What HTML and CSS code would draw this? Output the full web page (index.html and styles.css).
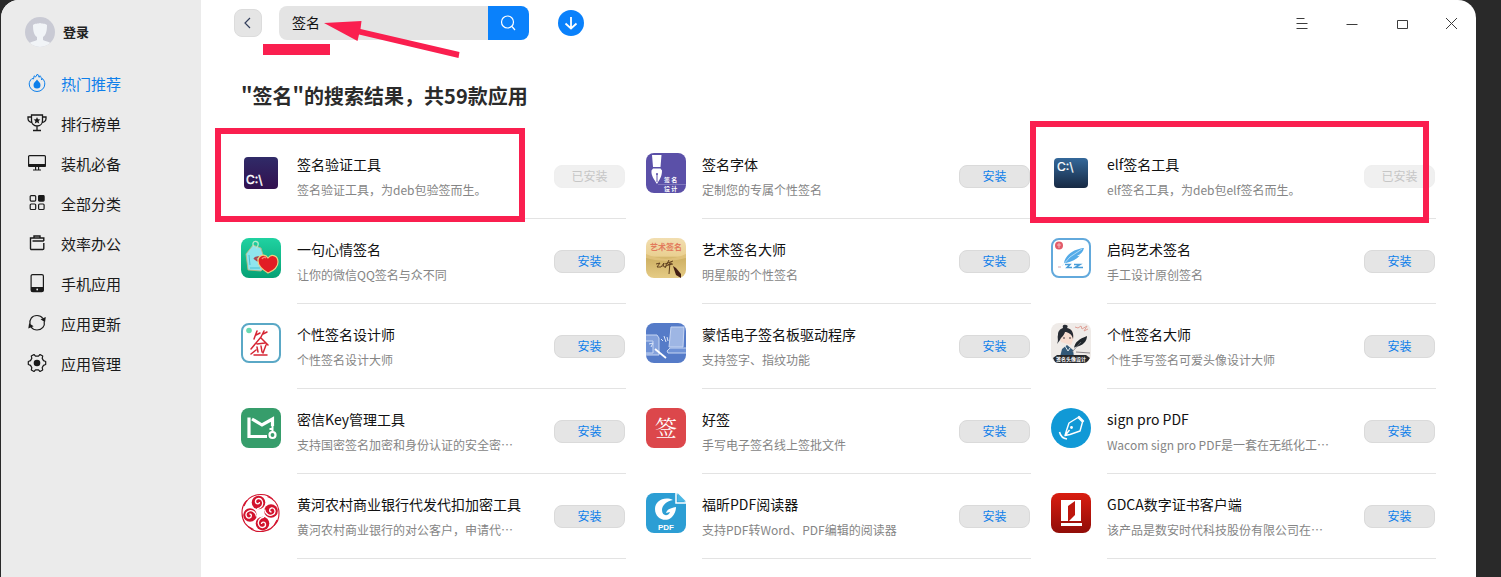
FILE: index.html
```html
<!DOCTYPE html>
<html lang="zh-CN">
<head>
<meta charset="utf-8">
<title>应用商店</title>
<link rel="stylesheet" href="styles.css">
</head>
<body>
<div class="window">
  <aside class="sidebar">
    <button class="account" type="button">
      <svg class="avatar" viewBox="0 0 30 30" aria-hidden="true"><defs><clipPath id="av"><circle cx="15" cy="15" r="15"/></clipPath></defs><g clip-path="url(#av)"><rect width="30" height="30" fill="#c9cad4"/><path d="M2 30c0-5 6-5 10-7v-3c-3-2-4-6-4-12 2-2 5-1 7-2 2 1 5 0 7 2 0 6-1 10-4 12v3c4 2 10 2 10 7z" fill="#f1f4f7"/></g></svg>
      <span>登录</span>
    </button>
    <nav class="nav">
      <a class="nav-item active" href="#"><svg viewBox="0 0 20 20"><path d="M5 5.500C3.300 7 2.200 9 2.200 11a7.800 7.500 0 0 0 15.600 0c0-2-.8-4-2.300-5.500l-.8 1.500c-.2-2-.8-3.300-1.700-4.300l-.8 1.600L10.500 1 8.500 4 7.200 2.800 6.500 6z" fill="none" stroke="currentColor"/><path d="M10 6.500c1 1.500 3.500 3 3.500 5.500a3.500 3.500 0 0 1-7 0c0-2.500 2.500-4 3.500-5.500z" fill="currentColor"/></svg>热门推荐</a>
      <a class="nav-item" href="#"><svg viewBox="0 0 20 20"><path d="M4.500 2h11v5.500c0 3.500-2.500 5.500-5.500 5.500s-5.500-2-5.500-5.500zM4.500 4H1v1.500C1 8 2.500 9 5 9.500M15.500 4H19v1.500C19 8 17.500 9 15 9.500M10 13v4M6 17.500h8" fill="none" stroke="currentColor" stroke-width="1.300"/><path d="M10 4l1 2.300 2.400.2-1.800 1.600.6 2.400-2.200-1.300-2.200 1.300.6-2.400-1.800-1.600 2.400-.2z" fill="currentColor"/></svg>排行榜单</a>
      <a class="nav-item" href="#"><svg viewBox="0 0 20 20"><rect x="1.600" y="2.600" width="16.800" height="10.800" rx="1" fill="none" stroke="currentColor" stroke-width="1.200"/><path d="M1.500 11h17v3h-17zM8 14h1.200v3H8zM11 14h1.200v3H11zM6 16.500h8v1H6z" fill="currentColor"/></svg>装机必备</a>
      <a class="nav-item" href="#"><svg viewBox="0 0 20 20" fill="none" stroke="currentColor" stroke-width="1.200"><rect x="3.200" y="2.600" width="5.500" height="5.500" rx="1"/><rect x="11.600" y="2.600" width="5.500" height="5.500" rx=".8" fill="currentColor"/><rect x="3.200" y="11" width="5.500" height="5.500" rx="1"/><rect x="11.600" y="11" width="5.500" height="5.500" rx="1"/></svg>全部分类</a>
      <a class="nav-item" href="#"><svg viewBox="0 0 20 20" fill="none" stroke="currentColor" stroke-width="1.400"><path d="M16.800 10v5.500a1 1 0 0 1-1 1H4.500a1 1 0 0 1-1-1V5h13.300v3M7 5V3h6v2M5.500 8h11.300"/></svg>效率办公</a>
      <a class="nav-item" href="#"><svg viewBox="0 0 20 20"><rect x="4.100" y="1.600" width="12.300" height="17" rx="1.500" fill="none" stroke="currentColor" stroke-width="1.200"/><path d="M4 14h12.500v3.500A1.500 1.500 0 0 1 15 19H5.500A1.500 1.500 0 0 1 4 17.500z" fill="currentColor"/><circle cx="10.200" cy="16.500" r=".9" fill="#ebebeb"/></svg>手机应用</a>
      <a class="nav-item" href="#"><svg viewBox="0 0 20 20"><path d="M3 11.500C2 6.500 5 2.500 10 2.500c2.500 0 4.500 1 6 3M17.200 8.500c1 4.500-2 8.500-7.200 8.500-2.500 0-4.500-1-6-3" fill="none" stroke="currentColor" stroke-width="1.200"/><path d="M18.800 4l-.8 5.200-4.500-3zM1.300 15.500l.8-5.200 4.500 3z" fill="currentColor"/></svg>应用更新</a>
      <a class="nav-item" href="#"><svg viewBox="0 0 20 20"><path d="M7 1.500l1.500 1.700h3L13 1.500l2.700 1.600-.5 2.300 1.300 2.200 2.200.9v3l-2.200.9-1.300 2.200.5 2.300L13 18.500l-1.500-1.700h-3L7 18.500l-2.700-1.600.5-2.300-1.300-2.200-2.200-.9v-3l2.200-.9 1.300-2.200-.5-2.300z" fill="none" stroke="currentColor" stroke-width="1.200" stroke-linejoin="round"/><circle cx="10" cy="10" r="3.300" fill="currentColor"/></svg>应用管理</a>
    </nav>
  </aside>

  <main class="main">
    <header class="toolbar">
      <button class="back" type="button" aria-label="返回"><svg width="14" height="14" viewBox="0 0 14 14"><path d="M9 2L4 7l5 5" fill="none" stroke="#333f5c" stroke-width="1.200"/></svg></button>
      <form class="search">
        <input type="text" value="签名" aria-label="搜索">
        <button type="button" aria-label="搜索"><svg width="18" height="18" viewBox="0 0 18 18" fill="none" stroke="#fff" stroke-width="1.200"><circle cx="7.500" cy="8" r="6"/><path d="M12 12.500L15 16"/></svg></button>
        <span class="underline-mark"></span>
        <svg class="arrow-mark" width="136" height="40" viewBox="0 0 136 40" aria-hidden="true"><path d="M0 4L37.500 2 36.500 10 135.500 33 134.500 39 35 15.500 33.500 22z" fill="#fa1f4f"/></svg>
      </form>
      <button class="download" type="button" aria-label="下载"><svg width="26" height="26" viewBox="0 0 26 26"><path d="M13 7v11.500M7.500 13.500l5.500 5 5.500-5" fill="none" stroke="#fff" stroke-width="1.800"/></svg></button>
      <div class="window-controls">
        <button type="button" aria-label="菜单"><svg viewBox="0 0 14 14"><path d="M2.500 2.500h8M2.500 7.500h11M2.500 12.500h11"/></svg></button>
        <button type="button" aria-label="最小化"><svg viewBox="0 0 14 14"><path d="M2.500 8.500h11"/></svg></button>
        <button type="button" aria-label="最大化"><svg viewBox="0 0 14 14"><path d="M3.500 4.500h10v8h-10z"/></svg></button>
        <button type="button" aria-label="关闭"><svg viewBox="0 0 14 14"><path d="M2 2l11 11M13 2L2 13"/></svg></button>
      </div>
    </header>

    <h1 class="heading">"签名"的搜索结果，共59款应用</h1>

    <section class="grid">
      <article class="card mark-first">
        <svg class="icon" viewBox="0 0 40 40"><defs><linearGradient id="g1" x2="0" y2="1"><stop stop-color="#302b68"/><stop offset="1" stop-color="#32104f"/></linearGradient></defs><rect x="3" y="4" width="34" height="32" rx="4" fill="url(#g1)"/><text x="5" y="31" font-size="12" fill="#fff" stroke="#fff" stroke-width=".4" class="mono-label">C:\</text></svg>
        <div class="body"><div class="info"><h2>签名验证工具</h2><p>签名验证工具，为deb包验签而生。</p></div><button type="button" disabled>已安装</button></div>
      </article>
      <article class="card">
        <svg class="icon" viewBox="0 0 40 40"><rect width="40" height="40" rx="8" fill="#5b50a8"/><path d="M6 2h9.500l-1 12H7zM7 15.500h7.500l1.500 2c0 6-2 8-5 13.500C8 26 5 23 5.500 17.500z" fill="#fff"/><path d="M11 21v8" stroke="#5b50a8"/><circle cx="11" cy="21" r="1" fill="#5b50a8"/><path d="M12 31.500h28" stroke="#a9a3d5" stroke-width=".5"/><g class="kai" fill="#fff" font-size="6" font-weight="700"><text x="18" y="29">签 名</text><text x="18" y="38">设 计</text></g></svg>
        <div class="body"><div class="info"><h2>签名字体</h2><p>定制您的专属个性签名</p></div><button type="button">安装</button></div>
      </article>
      <article class="card mark-third">
        <svg class="icon" viewBox="0 0 40 40"><defs><linearGradient id="g2" x2="0" y2="1"><stop stop-color="#34689a"/><stop offset="1" stop-color="#172943"/></linearGradient></defs><rect x="3" y="5" width="34" height="30" rx="4" fill="url(#g2)"/><text x="6" y="18" font-size="12" fill="#fff" stroke="#fff" stroke-width=".2" class="mono-label">C:\</text></svg>
        <div class="body"><div class="info"><h2>elf签名工具</h2><p>elf签名工具，为deb包elf签名而生。</p></div><button type="button" disabled>已安装</button></div>
      </article>

      <article class="card">
        <svg class="icon" viewBox="0 0 40 40"><defs><linearGradient id="g3" x2="0" y2="1"><stop stop-color="#20d2a1"/><stop offset="1" stop-color="#06a175"/></linearGradient></defs><rect width="40" height="40" rx="8" fill="url(#g3)"/><path d="M5 16L12 7l8 3 5 17-5 6-13-1z" fill="#8ee5ee" stroke="#c9b478" stroke-width=".8"/><path d="M13 9c-2-3-1-6 2-5.500s3 4 0 7" fill="none" stroke="#b6e9cc" stroke-width="1.300"/><path d="M9 30h10M8 17l1 10" stroke="#49bfd2"/><path d="M14 20l4-1M13 20l4 3" stroke="#a84953" stroke-width="2"/><path d="M27 35c-5-3-10-7-10-12 0-6 7-8 10-3 4-5 10-2 10 4 0 5-5 9-10 11z" fill="#e21d24" stroke="#f0d180" stroke-width="1.200"/><path d="M21 21c1-2 3-2 4-1" stroke="#ff8171" fill="none" stroke-width="1.500"/></svg>
        <div class="body"><div class="info"><h2>一句心情签名</h2><p>让你的微信QQ签名与众不同</p></div><button type="button">安装</button></div>
      </article>
      <article class="card">
        <svg class="icon" viewBox="0 0 40 40"><defs><linearGradient id="g4" x2="0" y2="1"><stop stop-color="#f2deb1"/><stop offset=".45" stop-color="#ead091"/><stop offset=".5" stop-color="#ceb063"/><stop offset="1" stop-color="#e5cb85"/></linearGradient></defs><rect width="40" height="40" rx="8" fill="url(#g4)"/><path d="M0 16q20 9 40 0v4q-20 6-40 0z" fill="#dfc17a"/><text x="4" y="12" font-size="8" font-weight="700" fill="#e27a5c" class="kai">艺术签名</text><path d="M10 26l4-1-3 4 4 0 3-4-1 4M19 26l8-3M23 22l-4 8M22 27l5-1M24 24l-1 12M18 29l8-4" fill="none" stroke="#60401f" stroke-width="1"/><path d="M27 28l3 2 5 6v4l-5-3z" fill="#442015"/></svg>
        <div class="body"><div class="info"><h2>艺术签名大师</h2><p>明星般的个性签名</p></div><button type="button">安装</button></div>
      </article>
      <article class="card">
        <svg class="icon" viewBox="0 0 40 40"><rect x="1" y="1" width="38" height="38" rx="7" fill="#fff" stroke="#62a9dc" stroke-width="2"/><circle cx="8" cy="7.500" r="4" fill="#e25b68"/><path d="M8 5v5M6 7h4" stroke="#f6b7bd"/><path d="M13 25c1-8 10-14 20-15-1 4-3 6-7 8 1 0 2 0 3-.5-4 4-8 6-14 7.500z" fill="#54abe8"/><path d="M11 28l8-9L31 11" fill="none" stroke="#d7efff" stroke-width=".7"/><path d="M14 26.500l5 0-3 3 5 0M23 26.500l6 0-5 3 8 0" fill="none" stroke="#489dd9" stroke-width="1.500"/><path d="M7 29h3" stroke="#d1a6b2"/></svg>
        <div class="body"><div class="info"><h2>启码艺术签名</h2><p>手工设计原创签名</p></div><button type="button">安装</button></div>
      </article>

      <article class="card">
        <svg class="icon" viewBox="0 0 40 40"><rect x="1" y="1" width="38" height="38" rx="7" fill="#fff" stroke="#5aa8c6" stroke-width="2"/><circle cx="8" cy="7.500" r="2.800" fill="#69d8b1"/><path d="M16 8l-3 8M15 12l4-2M23 8l-3 6M22 11l4-2M20 14l-10 12M20 15l7 7M16 21l8-1M16 24l1 5M20 23l1 6M25 22l-3 8M13 32l13 0M10 31l5-4" fill="none" stroke="#d62634" stroke-width="1.500" stroke-linecap="round"/></svg>
        <div class="body"><div class="info"><h2>个性签名设计师</h2><p>个性签名设计大师</p></div><button type="button">安装</button></div>
      </article>
      <article class="card">
        <svg class="icon" viewBox="0 0 40 40"><defs><clipPath id="c8"><rect width="40" height="40" rx="8"/></clipPath></defs><g clip-path="url(#c8)"><rect width="40" height="40" fill="#557bc8"/><path d="M-2 12h13l2 3v17H-2z" fill="#84a1dc" stroke="#c7d6f2"/><path d="M-1 18h8v12h-8" fill="#6f92d6" stroke="#c7d6f2"/><path d="M25 4h13l-1 20H23z" fill="#9eb6e4" stroke="#c7d6f2"/><path d="M21 28l3-3h18v5H22z" fill="#6f92d6" stroke="#c7d6f2"/><path d="M9 26l11 9" stroke="#fff" stroke-width="1.800"/><path d="M3 21l4-1-2 4M15 16l2 2M18 13l2 6M21 14l1 4" stroke="#dce6f8" fill="none"/></g></svg>
        <div class="body"><div class="info"><h2>蒙恬电子签名板驱动程序</h2><p>支持签字、指纹功能</p></div><button type="button">安装</button></div>
      </article>
      <article class="card">
        <svg class="icon" viewBox="0 0 40 40"><defs><clipPath id="c9"><rect width="40" height="40" rx="8"/></clipPath></defs><g clip-path="url(#c9)"><rect width="40" height="40" fill="#efebe8"/><path d="M8 13c0-7 4-9 8-8 5 0 8 5 6 12l-2 5-10-3z" fill="#f7ddd1"/><path d="M6 21c2-4 0-6 1-9 0-4 2-6 5-7-1-3 1-4 3-3 2 0 2 2 1 3 5 1 7 5 6 11-1-5-5-7-8-7-1 4-4 5-5 8z" fill="#272c34"/><path d="M12 15h2M18 15h2" stroke="#41363b"/><path d="M9 34l2-8 5-4 6 5 1 7z" fill="#335978"/><path d="M14 23l3 5 2-3" stroke="#dfe9ef" fill="none"/><path d="M23 25c1-6 5-9 13-12 0 5-4 10-12 11z" fill="#20262b"/><path d="M21 29L30 19" stroke="#70747b" stroke-width=".8"/><path d="M24 4l3 1 3-2 1 3 5-3-3 5 4-2" stroke="#dfa096" fill="none"/><path d="M25 29l14 1" stroke="#8b8588"/><path d="M2 35l4-3h29l4 3-4 6H5z" fill="#27282b"/><text x="5" y="38" font-size="5" font-weight="700" fill="#fff" class="kai">签名头像设计</text></g></svg>
        <div class="body"><div class="info"><h2>个性签名大师</h2><p>个性手写签名可爱头像设计大师</p></div><button type="button">安装</button></div>
      </article>

      <article class="card">
        <svg class="icon" viewBox="0 0 40 40"><rect width="40" height="40" rx="8" fill="#369d6b"/><path d="M26 28.500H8V9.500M11 11l10 6 10.500-6v7" fill="none" stroke="#fff" stroke-width="3.200"/><circle cx="31.500" cy="27" r="3" fill="none" stroke="#fff" stroke-width="2.200"/><path d="M31.500 24v-6M28.500 21h3" stroke="#fff" stroke-width="2"/></svg>
        <div class="body"><div class="info"><h2>密信Key管理工具</h2><p>支持国密签名加密和身份认证的安全密…</p></div><button type="button">安装</button></div>
      </article>
      <article class="card">
        <svg class="icon" viewBox="0 0 40 40"><rect width="40" height="40" rx="8" fill="#dc474b"/><text x="9" y="28" font-size="22" fill="#fff" class="serif">签</text></svg>
        <div class="body"><div class="info"><h2>好签</h2><p>手写电子签名线上签批文件</p></div><button type="button">安装</button></div>
      </article>
      <article class="card">
        <svg class="icon" viewBox="0 0 40 40"><circle cx="20" cy="20" r="20" fill="#1199d6"/><path d="M27 9.500l4.500 4.500-2.500 9-10 3.500-5 1 1.500-5 2.500-7.500zM14.500 27l4-5M27 9.500l1-1 4.500 4.500-1 1" fill="none" stroke="#fff" stroke-width="1.400" stroke-linejoin="round"/><circle cx="20.500" cy="19.500" r="1.400" fill="#fff"/><path d="M8.500 24c1 4 3.500 6.500 7.500 7" fill="none" stroke="#fff" stroke-width="1.600"/></svg>
        <div class="body"><div class="info"><h2>sign pro PDF</h2><p>Wacom sign pro PDF是一套在无纸化工…</p></div><button type="button">安装</button></div>
      </article>

      <article class="card">
        <svg class="icon" viewBox="0 0 40 40"><defs><g id="swirl"><circle cx="17.500" cy="9.500" r="6.800" fill="#d2132d"/><path d="M16 16c5-1 7-5 5-8.500s-7-2-6.500 1.500c.5 2.500 4 2.500 4 0" fill="none" stroke="#fff" stroke-width="1.300"/><path d="M3 13C6 5 12 1.500 20 1.500c5 0 9 1.500 12 5" fill="none" stroke="#d2132d" stroke-width="1.100"/></g></defs><use href="#swirl"/><use href="#swirl" transform="rotate(90 19.500 20)"/><use href="#swirl" transform="rotate(180 19.500 20)"/><use href="#swirl" transform="rotate(270 19.500 20)"/></svg>
        <div class="body"><div class="info"><h2>黄河农村商业银行代发代扣加密工具</h2><p>黄河农村商业银行的对公客户，申请代…</p></div><button type="button">安装</button></div>
      </article>
      <article class="card">
        <svg class="icon" viewBox="0 0 40 40"><path d="M8 0h22l10 10v22a8 8 0 0 1-8 8H8a8 8 0 0 1-8-8V8a8 8 0 0 1 8-8z" fill="#2c9ed4"/><path d="M31.500 0v8.500H40z" fill="#4cb7e4"/><path d="M30 0v10h10" fill="none" stroke="#fff" stroke-width="1.500"/><path d="M27 7C18 3 9 8 9 16c0 10 11 14 17 8 3-3 4-7 4-10-5 1-9 2-10 6l4-1c-2 5-8 4-8-2 0-5 5-9 11-10z" fill="#fff"/><text x="20" y="37" text-anchor="middle" font-size="8" font-weight="700" fill="#fff" class="sans">PDF</text></svg>
        <div class="body"><div class="info"><h2>福昕PDF阅读器</h2><p>支持PDF转Word、PDF编辑的阅读器</p></div><button type="button">安装</button></div>
      </article>
      <article class="card">
        <svg class="icon" viewBox="0 0 40 40"><defs><linearGradient id="g5" x2="0" y2="1"><stop stop-color="#d91d10"/><stop offset="1" stop-color="#910d08"/></linearGradient></defs><rect width="40" height="40" rx="8" fill="url(#g5)"/><path d="M10 7h20v21H10zM10 30h21v3H10z" fill="#fff"/><path d="M17 13l7-5v14l-6 6h-1z" fill="#bd160d"/></svg>
        <div class="body"><div class="info"><h2>GDCA数字证书客户端</h2><p>该产品是数安时代科技股份有限公司在…</p></div><button type="button">安装</button></div>
      </article>
    </section>
  </main>
</div>
</body>
</html>
```

FILE: styles.css
```css
* { box-sizing: border-box; }
body {
  margin: 0;
  background: #292929;
  color: #111;
  font-family: "Noto Sans CJK SC", sans-serif;
  font-size: 14px;
}
button, input { font: inherit; color: inherit; border: 0; padding: 0; margin: 0; background: none; }
svg { display: block; flex: none; }
.sans { font-family: "Liberation Sans", sans-serif; }
.mono-label { font-family: Inter, "Liberation Sans", sans-serif; }
.kai { font-family: "Noto Sans CJK SC", sans-serif; }
.serif { font-family: "Noto Serif CJK SC", "Noto Sans CJK SC", serif; font-weight: 400; }

.window {
  display: flex;
  min-height: 100vh;
  margin: 0 25px 0 1px;
  background: #fff;
  border-radius: 18px 18px 0 0;
  overflow: hidden;
}

.sidebar { flex: none; width: 200px; background: #ebebeb; }
.account {
  display: flex;
  align-items: center;
  gap: 8px;
  height: 63px;
  padding: 0 24px;
  font-size: 13px;
  line-height: 20px;
  font-weight: 700;
  color: #222;
}
.avatar { width: 30px; height: 30px; }
.nav-item {
  display: flex;
  align-items: center;
  gap: 14px;
  height: 40px;
  padding-left: 26px;
  font-size: 15px;
  color: #1a1a1a;
  text-decoration: none;
}
.nav-item svg { width: 20px; height: 20px; }
.nav-item.active { color: #0e7fea; }

.main { flex: 1; min-width: 0; }
.toolbar { display: flex; align-items: center; height: 46px; padding-left: 33px; }
.back {
  display: grid;
  place-items: center;
  width: 28px;
  height: 28px;
  margin-right: 17px;
  background: #e5e5e5;
  border: 1px solid #dcdcdc;
  border-radius: 8px;
}
.search { position: relative; display: flex; width: 250px; height: 34px; margin-right: 29px; }
.search input {
  flex: 1;
  min-width: 0;
  padding: 0 0 2px 13px;
  background: #e4e4e4;
  border-radius: 8px 0 0 8px;
}
.search button {
  display: grid;
  place-items: center;
  width: 41px;
  background: #0a81fb;
  border-radius: 0 8px 8px 0;
}
.underline-mark { position: absolute; left: -16px; top: 38px; width: 67px; height: 11px; background: #fa1f4f; }
.arrow-mark { position: absolute; left: 45px; top: 13px; }
.download { width: 26px; height: 26px; border-radius: 50%; background: #0a81fb; }
.window-controls { display: flex; margin-left: auto; }
.window-controls button { display: grid; place-items: center; width: 50px; height: 46px; }
.window-controls svg { width: 14px; height: 14px; fill: none; stroke: #3c3c3c; }

.heading { margin: 35px 40px 23px; font-size: 20px; line-height: 30px; font-weight: 700; color: #2b2b2b; }

.grid {
  display: grid;
  grid-template-columns: repeat(3, minmax(0, 1fr));
  column-gap: 20px;
  padding: 0 40px;
}
.card { position: relative; display: flex; gap: 16px; }
.icon { width: 40px; height: 40px; margin-top: 19px; }
.body {
  flex: 1;
  min-width: 0;
  display: flex;
  justify-content: space-between;
  height: 85px;
  padding: 19px 1px 0 0;
  border-bottom: 1px solid #e3e3e3;
}
.info { min-width: 0; white-space: nowrap; }
.info h2 { margin: 0 0 6px; font-size: 14px; line-height: 22px; font-weight: 400; }
.info p { margin: 0; font-size: 12px; line-height: 18px; color: #858585; }
.body button {
  flex: none;
  width: 71px;
  height: 23px;
  margin-top: 12px;
  padding-bottom: 2px;
  border: 1px solid #dadada;
  border-radius: 8px;
  background: #e5e5e5;
  color: #0e7fea;
  font-size: 12px;
  line-height: 18px;
}
.body button:disabled { border-color: #efefef; background: #f0f0f0; color: #c6c6c6; }

.mark-first::after, .mark-third::after { content: ""; position: absolute; border: 6px solid #fa1f4f; }
.mark-first::after { inset: -6px 101px -3px -26px; }
.mark-third::after { inset: -13px 7px -4px -21px; }
```
